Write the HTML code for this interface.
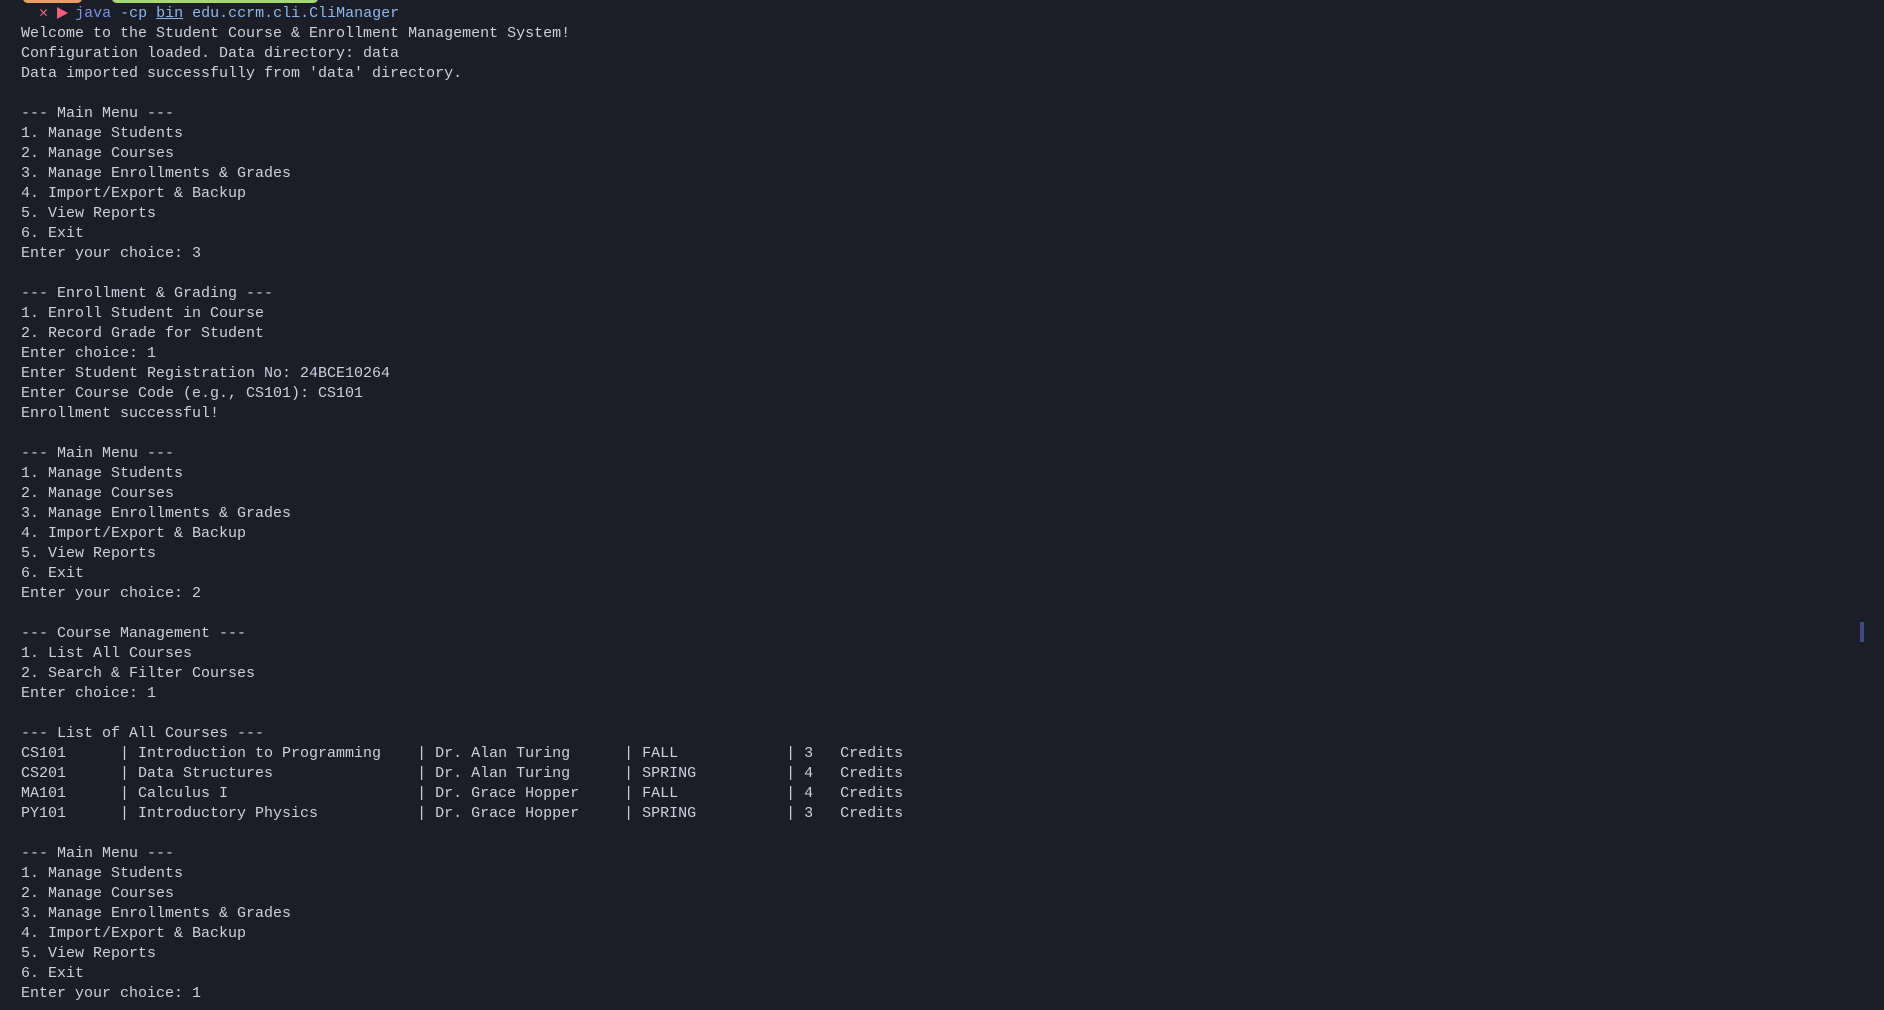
<!DOCTYPE html>
<html><head><meta charset="utf-8"><style>
html,body{margin:0;padding:0;background:#1b1d29;width:1884px;height:1010px;overflow:hidden}
pre{position:absolute;left:21px;top:4px;margin:0;font-family:"Liberation Mono",monospace;font-size:15px;line-height:20px;color:#cdd1dd;white-space:pre}
.p1{position:absolute;left:23px;top:-6px;width:59px;height:9px;background:#e8a060;border-radius:5px}
.p2{position:absolute;left:112px;top:-6px;width:206px;height:9px;background:#a6d86a;border-radius:5px}
.x{color:#f0607a}.j{color:#7e93e0}.c{color:#8fb8e8}
.u{text-decoration:underline}
.tri{position:absolute;left:57px;top:7px;width:0;height:0;border-top:6px solid transparent;border-bottom:6px solid transparent;border-left:11px solid #f0607a}
.sb{position:absolute;left:1860px;top:622px;width:4px;height:20px;background:#3d4a80}
</style></head><body>
<div class="p1"></div><div class="p2"></div><div class="sb"></div><div class="tri"></div>
<pre>  <span class="x">✕</span>   <span class="j">java</span> <span class="c">-cp <span class="u">bin</span> edu.ccrm.cli.CliManager</span>
Welcome to the Student Course &amp; Enrollment Management System!
Configuration loaded. Data directory: data
Data imported successfully from 'data' directory.

--- Main Menu ---
1. Manage Students
2. Manage Courses
3. Manage Enrollments &amp; Grades
4. Import/Export &amp; Backup
5. View Reports
6. Exit
Enter your choice: 3

--- Enrollment &amp; Grading ---
1. Enroll Student in Course
2. Record Grade for Student
Enter choice: 1
Enter Student Registration No: 24BCE10264
Enter Course Code (e.g., CS101): CS101
Enrollment successful!

--- Main Menu ---
1. Manage Students
2. Manage Courses
3. Manage Enrollments &amp; Grades
4. Import/Export &amp; Backup
5. View Reports
6. Exit
Enter your choice: 2

--- Course Management ---
1. List All Courses
2. Search &amp; Filter Courses
Enter choice: 1

--- List of All Courses ---
CS101      | Introduction to Programming    | Dr. Alan Turing      | FALL            | 3   Credits
CS201      | Data Structures                | Dr. Alan Turing      | SPRING          | 4   Credits
MA101      | Calculus I                     | Dr. Grace Hopper     | FALL            | 4   Credits
PY101      | Introductory Physics           | Dr. Grace Hopper     | SPRING          | 3   Credits

--- Main Menu ---
1. Manage Students
2. Manage Courses
3. Manage Enrollments &amp; Grades
4. Import/Export &amp; Backup
5. View Reports
6. Exit
Enter your choice: 1</pre>
</body></html>
